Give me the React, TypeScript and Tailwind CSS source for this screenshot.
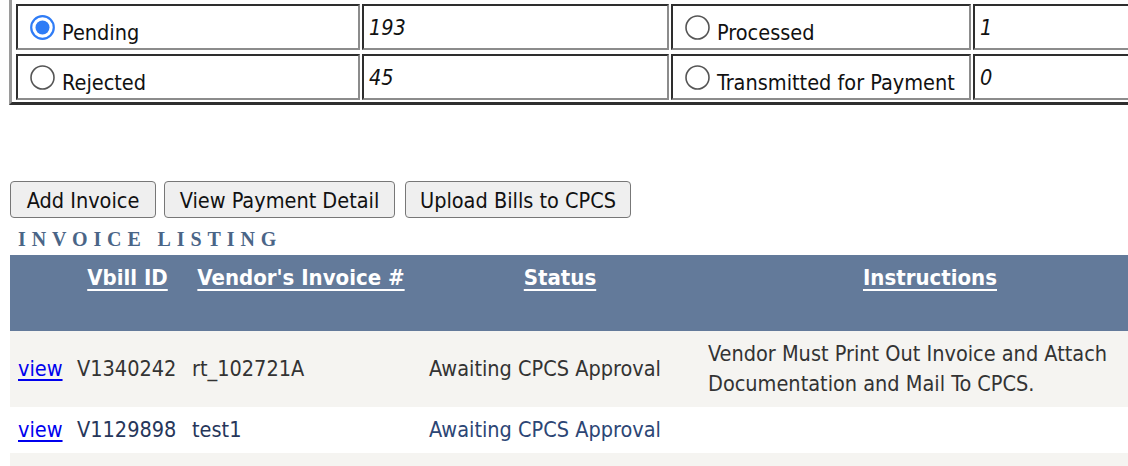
import React from "react";

const FONT = "font-['DejaVu_Sans_Condensed','DejaVu_Sans',sans-serif]";

function Radio({ checked }: { checked?: boolean }) {
  return (
    <svg width="25" height="25" viewBox="0 0 25 25" className="shrink-0">
      {checked ? (
        <>
          <circle cx="12.5" cy="12.5" r="11.3" fill="white" stroke="#2f7cf6" strokeWidth="2.2" />
          <circle cx="12.5" cy="12.5" r="7" fill="#2f7cf6" />
        </>
      ) : (
        <circle cx="12.5" cy="12.5" r="11.5" fill="white" stroke="#555" strokeWidth="1.6" />
      )}
    </svg>
  );
}

const cell =
  "h-[46px] border-2 border-t-[#2e2e2e] border-l-[#2e2e2e] border-b-[#8c8c8c] border-r-[#8c8c8c] flex items-center";

function LabelCell({ label, checked }: { label: string; checked?: boolean }) {
  return (
    <div className={`${cell} pl-[12px] gap-[7px]`}>
      <Radio checked={checked} />
      <span className="text-[21.5px] leading-[26px] text-[#111] mt-[11px]">{label}</span>
    </div>
  );
}

function ValueCell({ value }: { value: string }) {
  return (
    <div className={`${cell} pl-[5px]`}>
      <span className="text-[21.5px] leading-[26px] italic text-[#111] mt-[1px]">{value}</span>
    </div>
  );
}

function Btn({ children, w }: { children: React.ReactNode; w: string }) {
  return (
    <button
      className={`${w} h-[37px] pt-[3px] border border-[#777] rounded-[4px] bg-[#efefef] text-[21.5px] text-[#111] flex items-center justify-center`}
    >
      {children}
    </button>
  );
}

const cols = "grid grid-cols-[60px_115px_232px_286px_454px]";

export default function App() {
  return (
    <div className={`w-[1128px] h-[466px] overflow-hidden bg-white ${FONT}`}>
      <div className="w-[1170px]">
        {/* summary table */}
        <div className="ml-[9px] border-l-[3px] border-l-[#9a9a9a] border-b-[3px] border-b-[#2e2e2e] pt-[4px] pl-[4px] pb-[2px]">
          <div className="grid grid-cols-[344px_307px_300px_1fr] gap-x-[2px] gap-y-[4px]">
            <LabelCell label="Pending" checked />
            <ValueCell value="193" />
            <LabelCell label="Processed" />
            <ValueCell value="1" />
            <LabelCell label="Rejected" />
            <ValueCell value="45" />
            <LabelCell label="Transmitted for Payment" />
            <ValueCell value="0" />
          </div>
        </div>

        {/* buttons */}
        <div className="mt-[76px] ml-[10px] flex">
          <Btn w="w-[146px]">Add Invoice</Btn>
          <div className="ml-[8px]">
            <Btn w="w-[231px]">View Payment Detail</Btn>
          </div>
          <div className="ml-[10px]">
            <Btn w="w-[226px]">Upload Bills to CPCS</Btn>
          </div>
        </div>

        <div className="ml-[18px] mt-[10px] h-[27px] font-['Liberation_Serif',serif] font-bold text-[20px] tracking-[0.295em] text-[#4a6587] leading-[22px]">
          INVOICE LISTING
        </div>

        {/* listing */}
        <div className="ml-[10px] text-[21.5px]">
          <div className={`${cols} h-[76px] bg-[#637a9a] text-white font-bold text-[22px] leading-[30px]`}>
            <div />
            <div className="pt-[8px] text-center"><span className="underline underline-offset-[4px]">Vbill ID</span></div>
            <div className="pt-[8px] text-center whitespace-nowrap"><span className="underline underline-offset-[4px]">Vendor's Invoice #</span></div>
            <div className="pt-[8px] text-center"><span className="underline underline-offset-[4px]">Status</span></div>
            <div className="pt-[8px] text-center"><span className="underline underline-offset-[4px]">Instructions</span></div>
          </div>

          <div className={`${cols} bg-[#f5f4f1] text-[#333] leading-[30px] py-[8px] items-center`}>
            <div className="pl-[8px]"><a className="text-[#0000ee] underline underline-offset-[3px]">view</a></div>
            <div className="pl-[7px]">V1340242</div>
            <div className="pl-[7px]">rt_102721A</div>
            <div className="pl-[12px] whitespace-nowrap">Awaiting CPCS Approval</div>
            <div className="pl-[5px] whitespace-nowrap">Vendor Must Print Out Invoice and Attach<br />Documentation and Mail To CPCS.</div>
          </div>

          <div className={`${cols} bg-white text-[#26365a] leading-[30px] py-[8px] items-center`}>
            <div className="pl-[8px]"><a className="text-[#0000ee] underline underline-offset-[3px]">view</a></div>
            <div className="pl-[7px]">V1129898</div>
            <div className="pl-[7px]">test1</div>
            <div className="pl-[12px] whitespace-nowrap text-[#2c4675]">Awaiting CPCS Approval</div>
            <div className="pl-[5px]" />
          </div>

          <div className="h-[30px] bg-[#f5f4f1]" />
        </div>
      </div>
    </div>
  );
}
